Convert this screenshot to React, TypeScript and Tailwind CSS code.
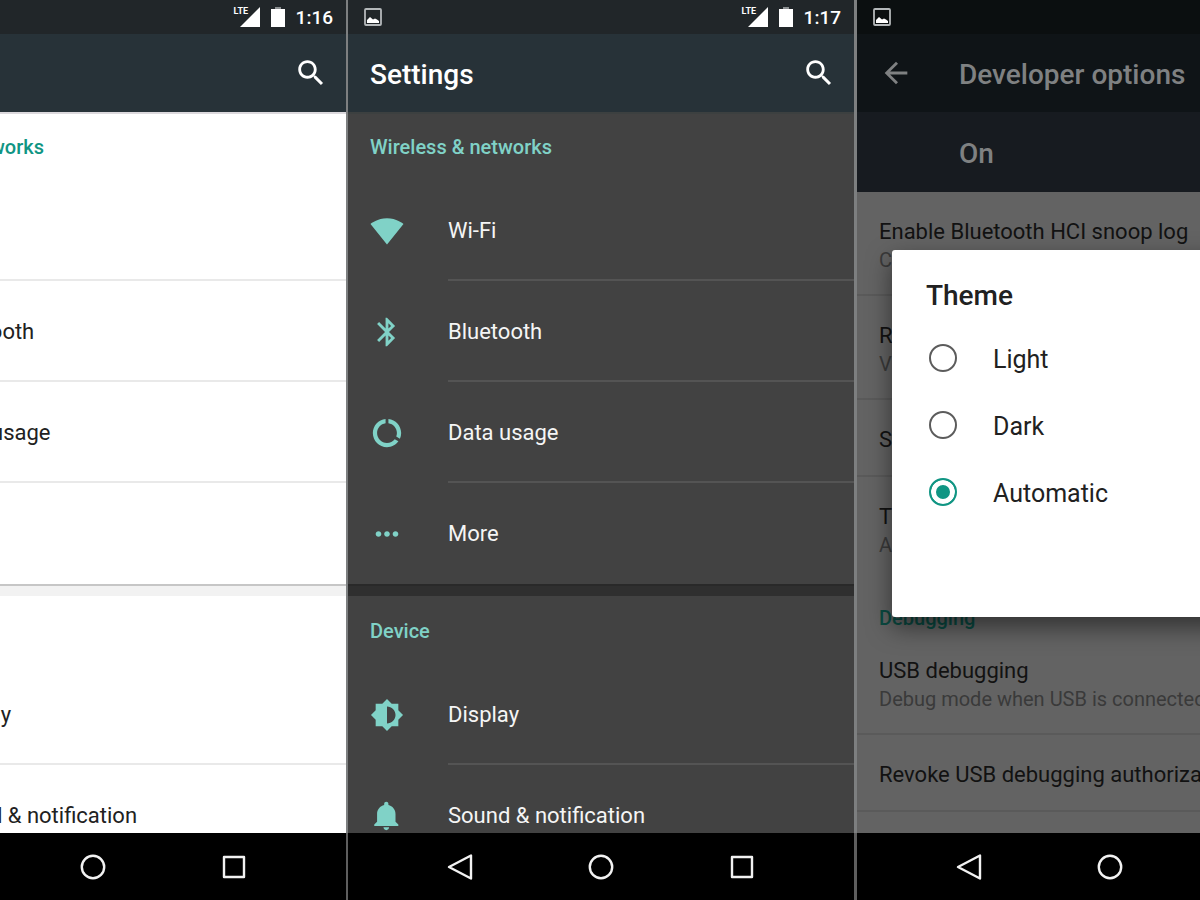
import React from "react";

type Tone = "light" | "dark";

const ICONS: Record<string, string> = {
  wifi: "M12.01 21.49L23.64 7c-.45-.34-4.93-4-11.64-4C5.28 3 .81 6.66.36 7l11.63 14.49.01.01.01-.01z",
  bluetooth:
    "M17.71 7.71L12 2h-1v7.59L6.41 5 5 6.41 10.59 12 5 17.59 6.41 19 11 14.41V22h1l5.71-5.71-4.3-4.29 4.3-4.29zM13 5.83l1.88 1.88L13 9.59V5.83zm1.88 10.46L13 18.17v-3.76l1.88 1.88z",
  data: "M13 2.05v3.03c3.39.49 6 3.39 6 6.92 0 .9-.18 1.75-.48 2.54l2.6 1.53c.56-1.24.88-2.62.88-4.07 0-5.18-3.95-9.45-9-9.95zM12 19c-3.87 0-7-3.13-7-7 0-3.53 2.61-6.43 6-6.92V2.05c-5.06.5-9 4.76-9 9.95 0 5.52 4.47 10 9.99 10 3.31 0 6.24-1.61 8.06-4.09l-2.6-1.53C16.17 17.98 14.21 19 12 19z",
  more: "M6 10c-1.1 0-2 .9-2 2s.9 2 2 2 2-.9 2-2-.9-2-2-2zm12 0c-1.1 0-2 .9-2 2s.9 2 2 2 2-.9 2-2-.9-2-2-2zm-6 0c-1.1 0-2 .9-2 2s.9 2 2 2 2-.9 2-2-.9-2-2-2z",
  display:
    "M20 15.31L23.31 12 20 8.69V4h-4.69L12 .69 8.69 4H4v4.69L.69 12 4 15.31V20h4.69L12 23.31 15.31 20H20v-4.69zM12 18V6c3.31 0 6 2.69 6 6s-2.69 6-6 6z",
  bell: "M11.5 22c1.1 0 2-.9 2-2h-4c0 1.1.9 2 2 2zm6.5-6v-5.5c0-3.07-2.13-5.64-5-6.32V3.5c0-.83-.67-1.5-1.5-1.5S10 2.67 10 3.5v.68c-2.87.68-5 3.25-5 6.32V16l-2 2v1h17v-1l-2-2z",
  search:
    "M15.5 14h-.79l-.28-.27C15.41 12.59 16 11.11 16 9.5 16 5.91 13.09 3 9.5 3S3 5.91 3 9.5 5.91 16 9.5 16c1.61 0 3.09-.59 4.23-1.57l.27.28v.79l5 4.99L20.49 19l-4.99-5zm-6 0C7.01 14 5 11.99 5 9.5S7.01 5 9.5 5 14 7.01 14 9.5 11.99 14 9.5 14z",
  back: "M20 11H7.83l5.59-5.59L12 4l-8 8 8 8 1.41-1.41L7.83 13H20v-2z",
};

function Icon({ name, className }: { name: string; className: string }) {
  return (
    <svg viewBox="0 0 24 24" fill="currentColor" className={className} aria-hidden="true">
      <path d={ICONS[name]} />
    </svg>
  );
}

function PictureIcon() {
  return (
    <svg viewBox="0 0 18 18" className="size-[18px] shrink-0" aria-label="Screenshot saved">
      <rect x="1" y="1" width="16" height="16" rx="1" fill="none" stroke="#b4b8ba" strokeWidth="1.8" />
      <path d="M3 15v-3l3-3 3 2.5 2-1 2 1 2 1.5v2z" fill="#fff" />
    </svg>
  );
}

function StatusBar({ time, picture, className }: { time?: string; picture?: boolean; className: string }) {
  return (
    <div className={`flex h-[34px] shrink-0 items-center pl-4 pr-[13px] ${className}`}>
      {picture && <PictureIcon />}
      {time && (
        <div className="ml-auto flex items-center text-white">
          <div className="relative mr-[11px] h-5 w-[26px]">
            <svg viewBox="0 0 26 20" className="h-5 w-[26px]" aria-hidden="true">
              <path d="M6 20L26 0v20z" fill="#fff" />
            </svg>
            <span className="absolute left-0 top-0 text-[9px] font-bold leading-[8px]">LTE</span>
          </div>
          <svg viewBox="0 0 14 20" className="mr-[11px] h-5 w-[14px]" aria-hidden="true">
            <path d="M4 0h6v2H4z" fill="#8b8f91" />
            <path d="M0 2h14v18H0z" fill="#fff" />
          </svg>
          <span className="pt-px text-[19px] font-medium leading-6">{time}</span>
        </div>
      )}
    </div>
  );
}

function NavBar() {
  return (
    <nav className="flex h-[67px] shrink-0 items-center justify-center gap-[113px] bg-black text-[#f2f2f2]">
      <button aria-label="Back">
        <svg viewBox="0 0 28 28" className="size-7" fill="none" stroke="currentColor" strokeWidth="2.4" strokeLinejoin="round">
          <path d="M3 14L25 2.5v23z" />
        </svg>
      </button>
      <button aria-label="Home">
        <svg viewBox="0 0 28 28" className="size-7" fill="none" stroke="currentColor" strokeWidth="2.4">
          <circle cx="14" cy="14" r="11.2" />
        </svg>
      </button>
      <button aria-label="Recent apps">
        <svg viewBox="0 0 28 28" className="size-7" fill="none" stroke="currentColor" strokeWidth="2.4" strokeLinejoin="round">
          <path d="M4 4h20v20H4z" />
        </svg>
      </button>
    </nav>
  );
}

const SECTIONS = [
  {
    title: "Wireless & networks",
    rows: [
      ["wifi", "Wi-Fi"],
      ["bluetooth", "Bluetooth"],
      ["data", "Data usage"],
      ["more", "More"],
    ],
  },
  {
    title: "Device",
    rows: [
      ["display", "Display"],
      ["bell", "Sound & notification"],
    ],
  },
];

const TONES = {
  light: {
    page: "bg-white text-[#212121]",
    accent: "text-[#109583]",
    line: "border-[#e9e9e9]",
    gap: "border-[#c6c6c6] bg-[#f2f2f2]",
    edge: "border-[#dcd9dd]",
  },
  dark: {
    page: "bg-[#424242] text-[#f5f5f5]",
    accent: "text-[#80d2c7]",
    line: "border-[#545454]",
    gap: "border-[#292929] bg-[#2f2f2f]",
    edge: "border-[#3c4040]",
  },
};

function SettingsPhone({ tone, time, picture }: { tone: Tone; time: string; picture?: boolean }) {
  const t = TONES[tone];
  return (
    <div className={`flex h-full w-full min-w-[506px] flex-col ${t.page}`}>
      <StatusBar time={time} picture={picture} className="bg-[#212629]" />
      <header className="flex h-[78px] shrink-0 items-center justify-between bg-[#273238] pl-[22px] pr-[18px] text-white">
        <h1 className="pt-1 text-[28px] font-medium leading-8">Settings</h1>
        <button aria-label="Search">
          <Icon name="search" className="size-[34px]" />
        </button>
      </header>
      <main className="min-h-0 flex-1 overflow-hidden">
        {SECTIONS.map((section, s) => (
          <section key={section.title}>
            {s > 0 && <div className={`h-3 border-t-2 ${t.gap}`} />}
            <h2
              className={`h-[68px] px-[22px] text-[20px] font-medium leading-6 ${
                s === 0 ? `border-t-2 pt-[21px] ${t.edge}` : "pt-[23px]"
              } ${t.accent}`}
            >
              {section.title}
            </h2>
            <ul>
              {section.rows.map(([icon, label], i) => (
                <li key={label}>
                  <a href={`#${icon}`} className="flex h-[101px] pl-[22px]">
                    <span className={`flex w-[78px] shrink-0 items-center ${t.accent}`}>
                      <Icon name={icon} className="size-[34px]" />
                    </span>
                    <span
                      className={`flex flex-1 items-center border-b-2 pt-[3px] text-[22px] leading-7 ${
                        i < section.rows.length - 1 ? t.line : "border-transparent"
                      }`}
                    >
                      {label}
                    </span>
                  </a>
                </li>
              ))}
            </ul>
          </section>
        ))}
      </main>
      <NavBar />
    </div>
  );
}

function Option({ title, summary, last }: { title: string; summary?: string; last?: boolean }) {
  return (
    <a
      href="#option"
      className={`block whitespace-nowrap border-b-2 px-[22px] pt-[26px] ${summary ? "h-[104px]" : "h-[77px]"} ${
        last ? "border-transparent" : "border-[#5a5a5a]"
      }`}
    >
      <span className="block text-[22px] leading-7">{title}</span>
      {summary && <span className="block text-[20px] leading-7 text-[#3a3a3a]">{summary}</span>}
    </a>
  );
}

function ThemeDialog() {
  return (
    <div className="absolute inset-x-0 bottom-[67px] top-[34px] flex items-center px-[35px]">
      <div
        role="dialog"
        aria-labelledby="theme-title"
        className="w-full rounded-[3px] bg-white px-[34px] pb-[90px] pt-7 text-[#212121] shadow-[0_10px_24px_rgba(0,0,0,0.5)]"
      >
        <h2 id="theme-title" className="mb-3 text-[28px] font-medium leading-9">
          Theme
        </h2>
        {["Light", "Dark", "Automatic"].map((name) => (
          <label key={name} className="flex h-[67px] items-center gap-9 pl-[3px] text-[25px] leading-8">
            <input
              type="radio"
              name="theme"
              defaultChecked={name === "Automatic"}
              className="mb-[3px] size-7 shrink-0 appearance-none rounded-full border-2 border-[#5c5c5c] bg-white checked:border-[#109583] checked:bg-[#109583] checked:shadow-[inset_0_0_0_5px_white]"
            />
            {name}
          </label>
        ))}
      </div>
    </div>
  );
}

function DeveloperPhone() {
  return (
    <div className="relative flex h-full w-full min-w-[506px] flex-col bg-[#636363] text-[#121212]">
      <StatusBar picture className="bg-[#0b0f10]" />
      <header className="flex h-[78px] shrink-0 items-center bg-[#0f1417] pl-[22px] text-[#7f8182]">
        <button aria-label="Navigate up" className="w-20">
          <Icon name="back" className="size-[34px]" />
        </button>
        <h1 className="pt-1 text-[28px] font-medium leading-8">Developer options</h1>
      </header>
      <div className="flex h-20 shrink-0 items-center bg-[#171b20] pl-[102px] pt-1 text-[28px] font-medium leading-8 text-[#7f8182]">
        On
      </div>
      <main className="min-h-0 flex-1 overflow-hidden">
        <Option title="Enable Bluetooth HCI snoop log" summary="Capture all bluetooth HCI packets in a file" />
        <Option title="Running services" summary="View and control running services" />
        <Option title="System UI tuner" />
        <Option title="Theme" summary="Automatic" last />
        <h2 className="h-[50px] px-[22px] pt-[25px] text-[20px] font-medium leading-6 text-[#0a4a41]">Debugging</h2>
        <Option title="USB debugging" summary="Debug mode when USB is connected" />
        <Option title="Revoke USB debugging authorizations" />
      </main>
      <NavBar />
      <ThemeDialog />
    </div>
  );
}

function Separator() {
  return (
    <div className="flex flex-col">
      <div className="flex-1 bg-[#7d7f80]" />
      <div className="h-[67px] bg-[#5e5e5e]" />
    </div>
  );
}

export default function App() {
  return (
    <div className="grid h-screen grid-cols-[346fr_2px_506fr_3px_343fr] overflow-hidden bg-black font-[Roboto,sans-serif]">
      <div className="flex min-w-0 justify-end overflow-hidden">
        <SettingsPhone tone="light" time="1:16" />
      </div>
      <Separator />
      <div className="min-w-0 overflow-hidden">
        <SettingsPhone tone="dark" time="1:17" picture />
      </div>
      <Separator />
      <div className="min-w-0 overflow-hidden">
        <DeveloperPhone />
      </div>
    </div>
  );
}
